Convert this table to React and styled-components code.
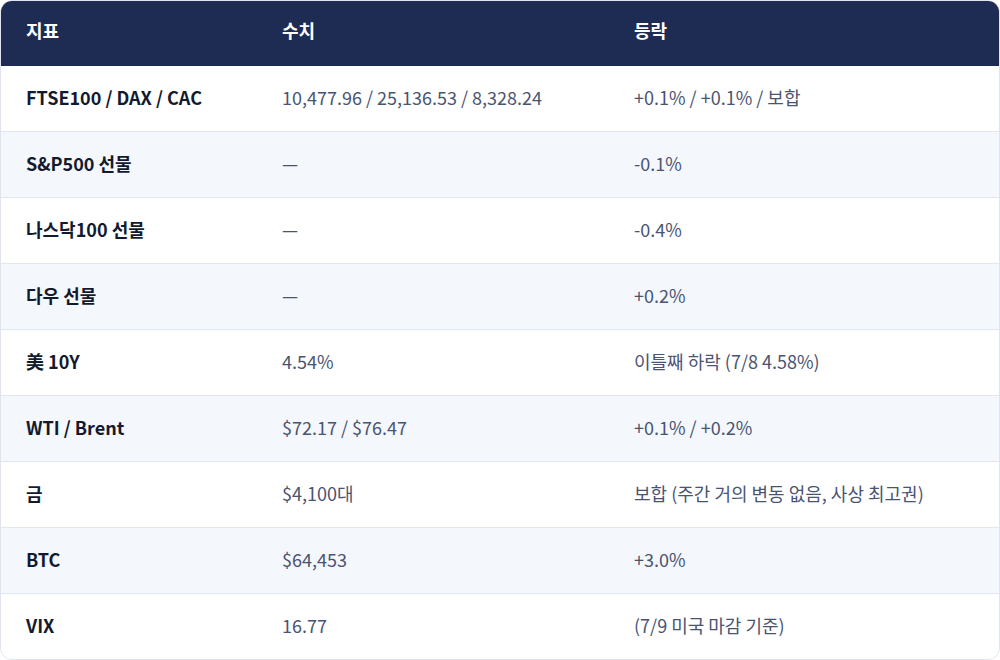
import React from "react";
import styled, { createGlobalStyle } from "styled-components";

const Global = createGlobalStyle`
  html, body { margin: 0; padding: 0; background: #ffffff; }
  * { box-sizing: border-box; }
  body { font-family: "Noto Sans CJK KR", "Noto Sans", sans-serif; }
`;

const Table = styled.div`
  width: 1000px;
  height: 660px;
  border: 1px solid #dfe4ee;
  border-radius: 12px;
  overflow: hidden;
  background: #ffffff;
  display: flex;
  flex-direction: column;
`;

const Row = styled.div`
  display: grid;
  grid-template-columns: 256px 352px 1fr;
  align-items: center;
  height: ${(p) => (p.$last ? "65px" : "66px")};
  padding: 0 25px 4px;
  background: ${(p) => (p.$alt ? "#f4f7fc" : "#ffffff")};
  border-bottom: ${(p) => (p.$last ? "none" : "1px solid #e1e6f0")};
  flex: none;
`;

const HeadRow = styled(Row)`
  height: 65px;
  padding-bottom: 7px;
  background: #1e2b53;
  border-bottom: none;
`;

const HeadCell = styled.div`
  color: #ffffff;
  font-size: 18px;
  line-height: 24px;
  font-weight: 700;
`;

const Cell = styled.div`
  font-size: 18px;
  line-height: 24px;
  color: ${(p) => (p.$strong ? "#141a2e" : "#4a5472")};
  font-weight: ${(p) => (p.$strong ? 700 : 400)};
  white-space: nowrap;
`;

const rows = [
  ["FTSE100 / DAX / CAC", "10,477.96 / 25,136.53 / 8,328.24", "+0.1% / +0.1% / 보합"],
  ["S&P500 선물", "—", "-0.1%"],
  ["나스닥100 선물", "—", "-0.4%"],
  ["다우 선물", "—", "+0.2%"],
  ["美 10Y", "4.54%", "이틀째 하락 (7/8 4.58%)"],
  ["WTI / Brent", "$72.17 / $76.47", "+0.1% / +0.2%"],
  ["금", "$4,100대", "보합 (주간 거의 변동 없음, 사상 최고권)"],
  ["BTC", "$64,453", "+3.0%"],
  ["VIX", "16.77", "(7/9 미국 마감 기준)"],
];

export default function App() {
  return (
    <>
      <Global />
      <Table>
        <HeadRow>
          <HeadCell>지표</HeadCell>
          <HeadCell>수치</HeadCell>
          <HeadCell>등락</HeadCell>
        </HeadRow>
        {rows.map((r, i) => (
          <Row key={i} $alt={i % 2 === 1} $last={i === rows.length - 1}>
            <Cell $strong>{r[0]}</Cell>
            <Cell>{r[1]}</Cell>
            <Cell>{r[2]}</Cell>
          </Row>
        ))}
      </Table>
    </>
  );
}
